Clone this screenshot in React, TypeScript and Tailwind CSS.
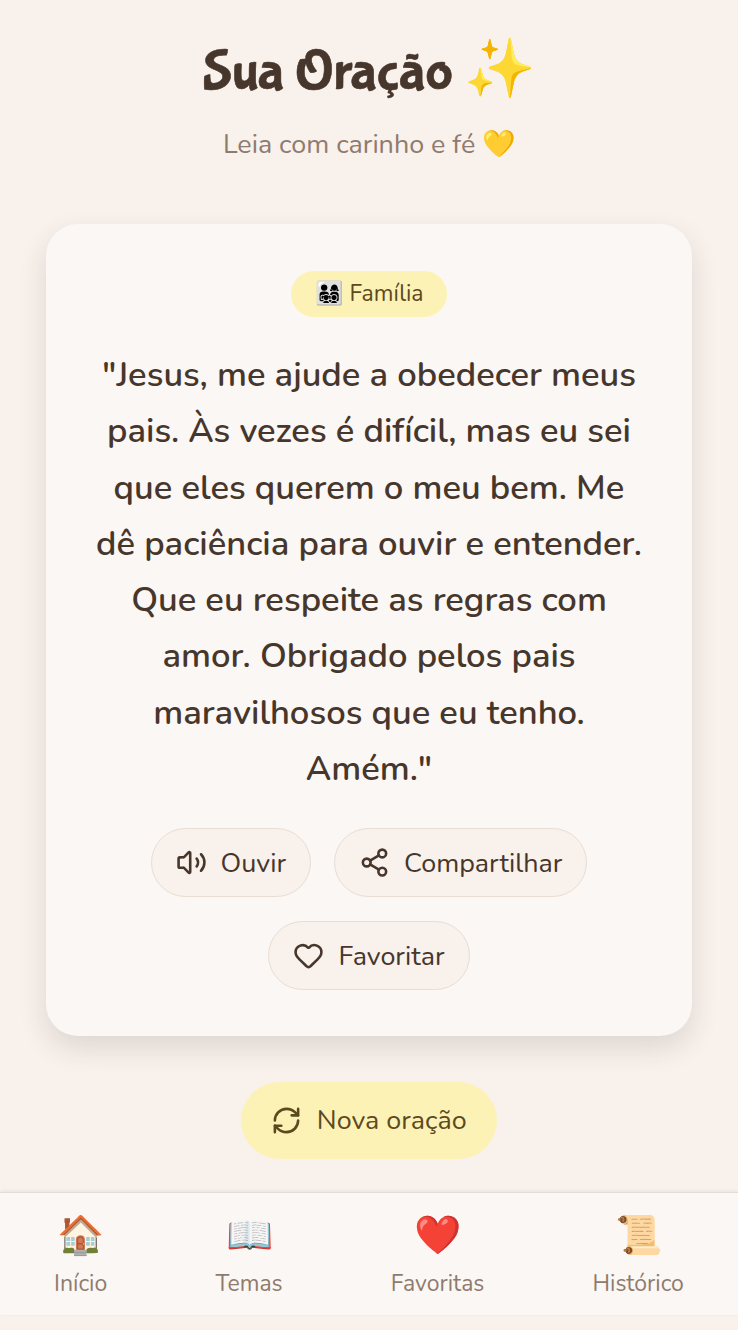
import { Volume2, Share2, Heart, RefreshCw } from "lucide-react";

const sans = "font-['Nunito','Noto_Sans',sans-serif]";

const Action = ({ icon, label }: { icon: React.ReactNode; label: string }) => (
  <button className="flex h-[69px] items-center gap-[14px] rounded-full border border-[#e8ddd3] bg-[#f8f1ec] px-6 text-[26.9px] leading-[36px] text-[#46362b]">
    {icon}
    {label}
  </button>
);

const NavItem = ({ emoji, label }: { emoji: string; label: string }) => (
  <div className="flex flex-col items-center">
    <span className="text-[38px] leading-[50px]">{emoji}</span>
    <span className="mt-[7px] text-[23px] leading-[32px] text-[#8f7b6e]">{label}</span>
  </div>
);

export default function App() {
  return (
    <div className={`flex h-[1330px] w-[738px] flex-col bg-[#f8f1ec] ${sans}`}>
      <header className="flex flex-col items-center pt-[35px]">
        <h1 className="font-['Bubblegum_Sans','Nunito',sans-serif] text-[57.4px] font-normal leading-[76px] text-[#46362b] [-webkit-text-stroke:0.6px_#46362b]">Sua Oração ✨</h1>
        <p className="mt-[14px] text-[26.9px] leading-[38px] text-[#8f7b6e]">Leia com carinho e fé 💛</p>
      </header>

      <section className="mx-[46px] mt-[61px] flex h-[812px] flex-col items-center rounded-[32px] bg-[#fbf7f4] px-12 pt-[47px] shadow-[0_12px_28px_rgba(74,55,40,0.14)]">
        <span className="flex h-[46px] items-center rounded-full bg-[#fdf2b6] px-6 text-[23px] text-[#5c4a1e]">👨‍👩‍👧‍👦 Família</span>
        <p className="mt-[30px] text-center text-[34.6px] font-semibold leading-[56.3px] text-[#46362b]">
          "Jesus, me ajude a obedecer meus pais. Às vezes é difícil, mas eu sei que eles querem o meu bem. Me dê paciência para ouvir e entender. Que eu respeite as regras com amor. Obrigado pelos pais maravilhosos que eu tenho. Amém."
        </p>
        <div className="mt-[31px] flex flex-wrap justify-center gap-x-[23px] gap-y-[24px]">
          <Action icon={<Volume2 size={31} strokeWidth={2} />} label="Ouvir" />
          <Action icon={<Share2 size={31} strokeWidth={2} />} label="Compartilhar" />
          <Action icon={<Heart size={31} strokeWidth={2} />} label="Favoritar" />
        </div>
      </section>

      <div className="mt-[46px] flex justify-center">
        <button className="flex h-[77px] items-center gap-[14.5px] rounded-full bg-[#fdf2b6] px-[30px] text-[26.9px] text-[#5c4a1e]">
          <RefreshCw size={31} strokeWidth={2} />
          Nova oração
        </button>
      </div>

      <nav className="mb-[15px] mt-auto flex h-[123px] items-start justify-around border-t border-[#e4dcd6] bg-[#fbf7f4] pt-[18px] shadow-[0_-1px_3px_rgba(74,55,40,0.08)]">
        <NavItem emoji="🏠" label="Início" />
        <NavItem emoji="📖" label="Temas" />
        <NavItem emoji="❤️" label="Favoritas" />
        <NavItem emoji="📜" label="Histórico" />
      </nav>
    </div>
  );
}
